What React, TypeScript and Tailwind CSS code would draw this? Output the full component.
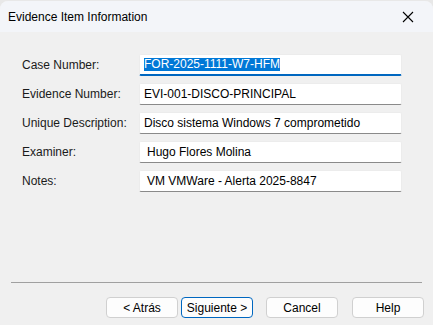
const FONT = "font-['Liberation_Sans',Arial,sans-serif]";

const FIELDS = [
  { label: "Case Number:", value: "FOR-2025-1111-W7-HFM", selected: true },
  { label: "Evidence Number:", value: "EVI-001-DISCO-PRINCIPAL" },
  { label: "Unique Description:", value: "Disco sistema Windows 7 comprometido" },
  { label: "Examiner:", value: "Hugo Flores Molina", indent: true },
  { label: "Notes:", value: "VM VMWare - Alerta 2025-8847", indent: true },
];

function Field({ value, selected, indent }: { value: string; selected?: boolean; indent?: boolean }) {
  return (
    <div
      className={`flex h-[22px] w-[263px] items-center rounded-[2px] border border-[#ececec] bg-white ${
        selected ? "border-b-2 border-b-[#0067c0]" : "border-b-[#8a8a8a]"
      } ${indent ? "pl-[7px]" : "pl-[4px]"}`}
    >
      {selected ? (
        <span className="bg-[#0078d7] leading-[13px] text-white">{value}</span>
      ) : (
        <span className="text-black">{value}</span>
      )}
    </div>
  );
}

function Btn({ children, primary }: { children: React.ReactNode; primary?: boolean }) {
  return (
    <button
      className={`h-[21px] w-[72px] rounded-[4px] border bg-[#fdfdfd] text-[12px] text-black ${
        primary ? "border-[#0067c0]" : "border-[#d0d0d0]"
      }`}
    >
      {children}
    </button>
  );
}

export default function App() {
  return (
    <div className={`h-[325px] w-[433px] overflow-hidden bg-[#e8e8e8] text-[12px] ${FONT}`}>
      <div className="mt-[1px] flex h-[324px] flex-col rounded-t-[8px] bg-[#f0f0f0]">
        <div className="flex h-[31px] items-center justify-between rounded-t-[8px] bg-[#f3f5f9] pl-[8px] pr-[19px]">
          <span className="text-black">Evidence Item Information</span>
          <svg width="12" height="12" viewBox="0 0 12 12" className="text-black">
            <path d="M1 1 L11 11 M11 1 L1 11" stroke="currentColor" strokeWidth="1.1" />
          </svg>
        </div>
        <div className="flex flex-col gap-[7px] pl-[22px] pt-[22px]">
          {FIELDS.map((f) => (
            <div key={f.label} className="flex items-center">
              <span className="w-[117px] text-[#1a1a1a]">{f.label}</span>
              <Field value={f.value} selected={f.selected} indent={f.indent} />
            </div>
          ))}
        </div>
        <div className="mx-[11px] mt-auto border-t border-[#a0a0a0]" />
        <div className="flex pb-[7px] pl-[106px] pt-[14px]">
          <div className="flex gap-[3px]">
            <Btn>&lt; Atrás</Btn>
            <Btn primary>Siguiente &gt;</Btn>
          </div>
          <div className="ml-[13px] flex gap-[14px]">
            <Btn>Cancel</Btn>
            <Btn>Help</Btn>
          </div>
        </div>
      </div>
    </div>
  );
}
